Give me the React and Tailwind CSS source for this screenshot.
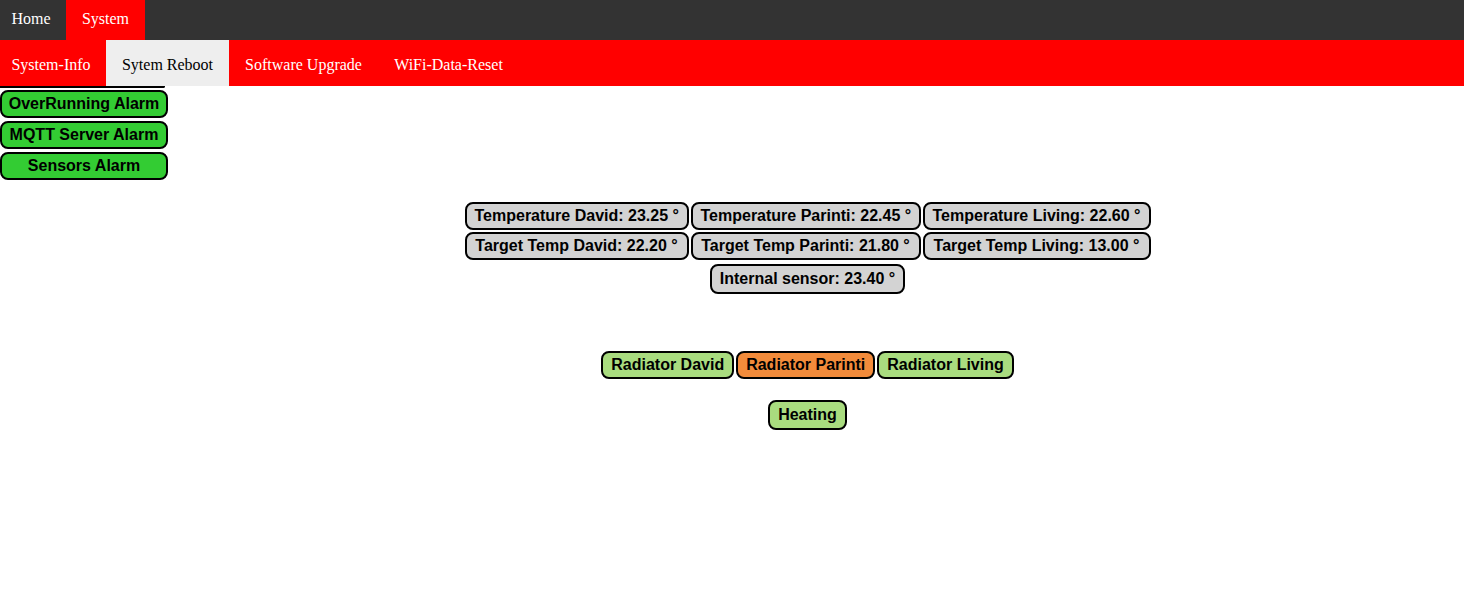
export default function App() {
    const sensors = [
        "Temperature David: 23.25 °", "Temperature Parinti: 22.45 °", "Temperature Living: 22.60 °",
        "Target Temp David: 22.20 °", "Target Temp Parinti: 21.80 °", "Target Temp Living: 13.00 °",
    ];
    const pill = "border-2 border-black rounded-[8px] px-[8px] py-[3px] leading-[18px] text-[16px] font-bold text-black whitespace-nowrap";

    return (
        <div className="min-h-screen bg-white" style={{ fontFamily: "'Liberation Sans', Arial, sans-serif" }}>
            {/* top nav */}
            <div className="relative z-10 flex h-[40px] bg-[#333333] text-[16px] text-white" style={{ fontFamily: "'Liberation Serif', 'Times New Roman', serif" }}>
                <div className="flex w-[66px] items-center justify-center pb-[2px] pr-[4px]">Home</div>
                <div className="flex w-[79px] items-center justify-center bg-[#ff0000] pb-[2px]">System</div>
            </div>

            {/* sub nav */}
            <div className="relative z-10 flex h-[46px] bg-[#ff0000] text-[16px] text-white" style={{ fontFamily: "'Liberation Serif', 'Times New Roman', serif" }}>
                <div className="flex w-[106px] items-center justify-center pt-[3px] pr-[4px]">System-Info</div>
                <div className="flex w-[123px] items-center justify-center bg-[#eeeeee] pt-[3px] text-black">Sytem Reboot</div>
                <div className="flex w-[149px] items-center justify-center pt-[3px]">Software Upgrade</div>
                <div className="flex w-[141px] items-center justify-center pt-[3px]">WiFi-Data-Reset</div>
            </div>

            <div className="flex">
                {/* alarms */}
                <div className="flex w-[168px] shrink-0 flex-col">
                    <div className="h-[2px] w-[165px] rounded-br-[6px] border-b-2 border-r-2 border-black"></div>
                    <div className="mt-[2px] flex flex-col gap-[3px]">
                        {["OverRunning Alarm", "MQTT Server Alarm", "Sensors Alarm"].map((a) => (
                            <div key={a} className="flex h-[28px] items-center justify-center rounded-[8px] border-2 border-black bg-[#33cc33] text-[16px] font-bold text-black">
                                {a}
                            </div>
                        ))}
                    </div>
                </div>

                {/* main */}
                <div className="flex flex-1 flex-col items-center pr-[17px] pt-[116px]">
                    <div className="grid grid-cols-[224px_230px_228px] gap-x-[2px] gap-y-[2px]">
                        {sensors.map((s) => (
                            <div key={s} className={pill + " bg-[#d3d3d3] px-0 text-center"}>{s}</div>
                        ))}
                    </div>
                    <div className={pill + " mt-[4px] bg-[#d3d3d3] py-[4px]"}>Internal sensor: 23.40 °</div>

                    <div className="mt-[57px] flex gap-[2px]">
                        <div className={pill + " bg-[#a9dc7f]"}>Radiator David</div>
                        <div className={pill + " bg-[#f28b3b]"}>Radiator Parinti</div>
                        <div className={pill + " bg-[#a9dc7f]"}>Radiator Living</div>
                    </div>

                    <div className={pill + " mt-[21px] bg-[#a9dc7f] py-[4px]"}>Heating</div>
                </div>
            </div>
        </div>
    );
}
